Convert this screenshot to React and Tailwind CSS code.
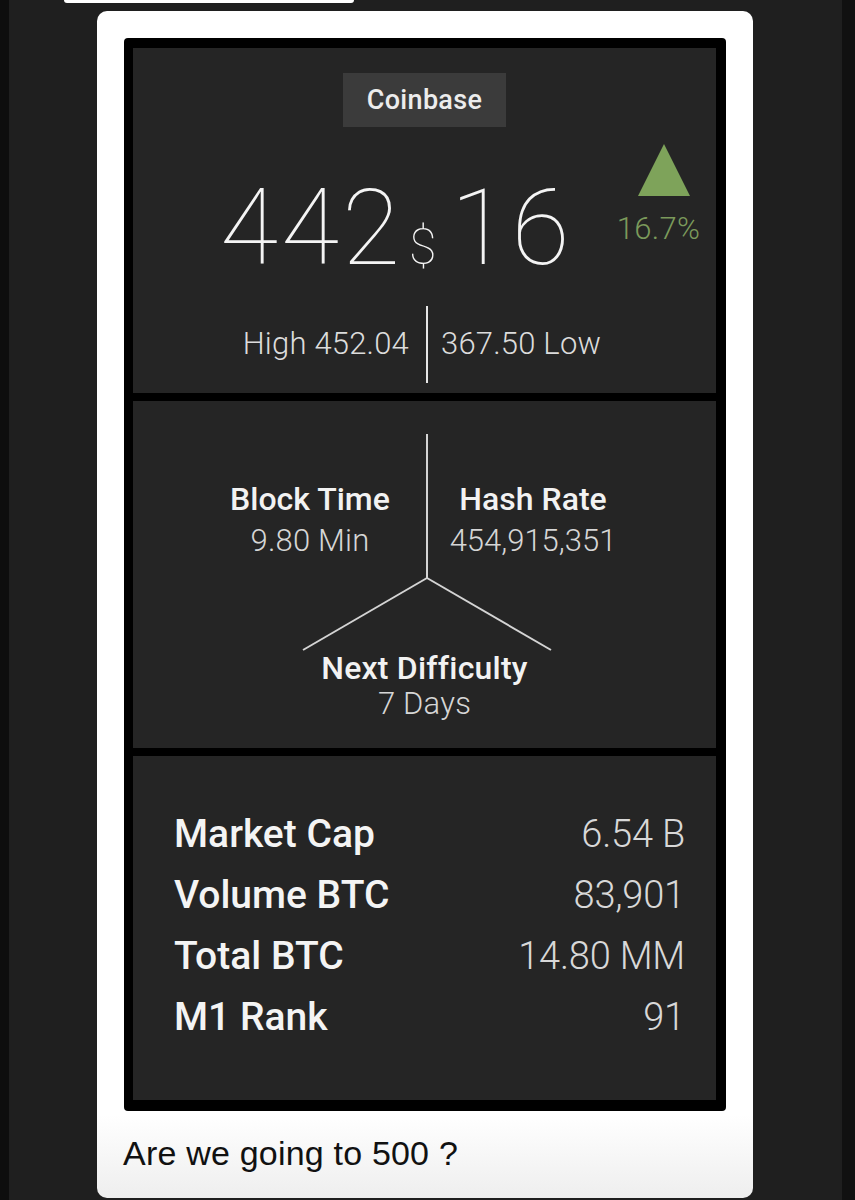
import React from "react";

const din = { fontFamily: "Roboto, 'Noto Sans', sans-serif" };

export default function App() {
  return (
    <div className="w-[855px] h-[1200px] bg-[#1f1f1f] flex overflow-hidden" style={din}>
      <div className="w-[9px] h-full bg-[#0e0e0e] shrink-0" />
      <div className="flex-1 flex flex-col">
        <div className="ml-[55px] w-[290px] h-[3px] bg-white rounded-b-[3px]" />
        <div className="ml-[88px] mt-[8px] w-[656px] h-[1187px] rounded-[10px] bg-gradient-to-b from-white from-[93%] to-[#eeeeee] p-[27px] flex flex-col">
          {/* black frame */}
          <div className="bg-black rounded-[4px] pt-[10px] pl-[9px] pr-[10px] pb-[11px] flex flex-col gap-[8px]">
            {/* panel 1 */}
            <div className="relative h-[345px] bg-[#252525] flex flex-col">
              <div className="self-center mt-[25px] w-[163px] h-[54px] bg-[#3b3b3b] flex items-center justify-center text-[27px] font-medium text-[#ececec] tracking-[0.3px]">
                Coinbase
              </div>
              <div className="flex items-start mt-[48px]">
                <div className="ml-[87px] flex items-baseline text-[#f4f4f4] font-thin leading-none">
                  <span className="text-[106px] tracking-[3px]">442</span>
                  <span className="text-[50px] ml-[6px] mr-[14px]">$</span>
                  <span className="text-[106px] tracking-[3px]">16</span>
                </div>
                <div className="ml-[36px] -mt-[31px] w-[96px] flex flex-col items-center">
                  <svg width="54" height="52" viewBox="0 0 54 52" className="ml-[16px]">
                    <polygon points="27,0 53,52 1,52" fill="#7ea35a" />
                  </svg>
                  <span className="mt-[17px] ml-[4px] text-[31px] font-light text-[#7b9a5b] tracking-[0.3px] leading-none">16.7%</span>
                </div>
              </div>
              <div className="flex items-center mt-[25px] text-[31px] font-light text-[#dcdcdc] tracking-[0.2px]">
                <span className="w-[293px] text-right pr-[17px]">High 452.04</span>
                <div className="w-[2px] h-[77px] bg-[#e6e6e6]" />
                <span className="pl-[13px]">367.50 Low</span>
              </div>
            </div>
            {/* panel 2 */}
            <div className="relative h-[347px] bg-[#252525] flex flex-col">
              <svg className="absolute left-0 top-0" width="584" height="347" viewBox="0 0 584 347">
                <g stroke="#d4d4d4" strokeWidth="2" fill="none">
                  <line x1="294" y1="33" x2="294" y2="177" />
                  <line x1="294" y1="177" x2="170" y2="249" />
                  <line x1="294" y1="177" x2="418" y2="249" />
                </g>
              </svg>
              <div className="flex mt-[82px]">
                <div className="ml-[77px] w-[200px] flex flex-col items-center leading-none">
                  <span className="text-[32px] font-medium text-[#f2f2f2] tracking-[0px]">Block Time</span>
                  <span className="mt-[10px] text-[31px] font-light text-[#d6d6d6] tracking-[0.2px]">9.80 Min</span>
                </div>
                <div className="ml-[23px] w-[200px] flex flex-col items-center leading-none">
                  <span className="text-[32px] font-medium text-[#f2f2f2] tracking-[0px]">Hash Rate</span>
                  <span className="mt-[10px] text-[31px] font-light text-[#d6d6d6] tracking-[0px]">454,915,351</span>
                </div>
              </div>
              <div className="flex flex-col items-center mt-[96px] leading-none">
                <span className="text-[32px] font-medium text-[#f2f2f2] tracking-[0.2px]">Next Difficulty</span>
                <span className="mt-[4px] text-[31px] font-light text-[#d6d6d6] tracking-[0.2px]">7 Days</span>
              </div>
            </div>
            {/* panel 3 */}
            <div className="h-[344px] bg-[#252525] pl-[41px] pr-[31px] pt-[48px] flex flex-col">
              {[
                ["Market Cap", "6.54 B"],
                ["Volume BTC", "83,901"],
                ["Total BTC", "14.80 MM"],
                ["M1 Rank", "91"],
              ].map(([k, v]) => (
                <div key={k} className="flex justify-between items-baseline h-[61px] leading-[61px]">
                  <span className="font-medium text-[#f4f4f4] text-[39px] tracking-[0px]">{k}</span>
                  <span className="font-light text-[#d8d8d8] text-[38px] tracking-[-0.2px]">{v}</span>
                </div>
              ))}
            </div>
          </div>
          <div className="mt-[25px] -ml-[1px] text-[34px] text-[#111] leading-none tracking-[0.2px]" style={{ fontFamily: "'Liberation Sans', Arial, sans-serif" }}>
            Are we going to 500 ?
          </div>
        </div>
      </div>
      <div className="w-[13px] h-full bg-[#111111] shrink-0" />
    </div>
  );
}
